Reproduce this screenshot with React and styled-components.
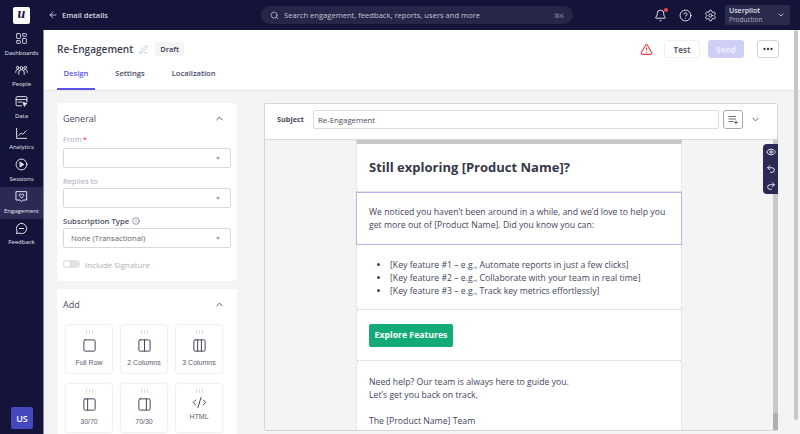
import React from 'react';
import styled, { createGlobalStyle } from 'styled-components';
import {
  ArrowLeft, Search, Bell, CircleHelp, Settings, ChevronDown, ChevronUp, PenLine, TriangleAlert,
  Ellipsis, LayoutDashboard, Info, Square, Columns2, Columns3, PanelLeft, PanelRight, CodeXml,
  Eye, Undo2, Redo2,
} from 'lucide-react';

const GlobalStyle = createGlobalStyle`
  html, body { margin: 0; padding: 0; height: 100%; overflow: hidden; }
  body { font-family: "Open Sans", "Liberation Sans", sans-serif; background: #f4f4f4; color: #3c3e52; }
  * { box-sizing: border-box; }
`;

const NavSvg = ({ children }) => (
  <svg width="13" height="13" viewBox="0 0 24 24" fill="none" stroke="currentColor" strokeWidth="1.8" strokeLinecap="round" strokeLinejoin="round">
    {children}
  </svg>
);

const PeopleIcon = () => (
  <NavSvg>
    <circle cx="12" cy="7.5" r="2.6" />
    <circle cx="4.8" cy="6.5" r="2.2" />
    <circle cx="19.2" cy="6.5" r="2.2" />
    <path d="M7 19v-3.5a5 5 0 0 1 10 0V19" />
    <path d="M1.5 15.5v-2a3.5 3.5 0 0 1 5-3" />
    <path d="M22.5 15.5v-2a3.5 3.5 0 0 0-5-3" />
  </NavSvg>
);

const DataIcon = () => (
  <NavSvg>
    <path d="M12 20H4a2 2 0 0 1-2-2V5a2 2 0 0 1 2-2h16a2 2 0 0 1 2 2v8" />
    <path d="M2 8.5h20" />
    <path d="M6 13h6" />
    <path d="M15 13.5l7 2.6-3 1.2-1.2 3z" fill="currentColor" />
  </NavSvg>
);

const AnalyticsIcon = () => (
  <NavSvg>
    <path d="M3 2.5V21h18.5" />
    <path d="M7 15.5l4.5-4.5 3 2.5 6-6.5" />
  </NavSvg>
);

const SessionsIcon = () => (
  <NavSvg>
    <circle cx="12" cy="12" r="10" />
    <path d="M9.8 7.8l6.2 4.2-6.2 4.2z" fill="currentColor" />
  </NavSvg>
);

const EngagementIcon = () => (
  <NavSvg>
    <path d="M2.5 3h19v15.5h-6.5L12 21.5l-3-3H2.5z" />
    <path d="M12 14.5l-3.6-3.4a2.1 2.1 0 0 1 3-3l.6.6.6-.6a2.1 2.1 0 0 1 3 3z" />
  </NavSvg>
);

const FeedbackIcon = () => (
  <NavSvg>
    <path d="M12 2.5a9.5 9.5 0 1 1-4.6 17.8L2.5 21.5l1.3-4.8A9.5 9.5 0 0 1 12 2.5z" />
    <path d="M8 12h8" />
  </NavSvg>
);

const AddVariableIcon = () => (
  <svg width="12" height="12" viewBox="0 0 24 24" fill="none" stroke="currentColor" strokeWidth="2">
    <path d="M3 5h15M3 10h15M3 15h10M18 13v8M14 17h8" />
  </svg>
);

const NAV = [
  { label: 'Dashboards', icon: <LayoutDashboard size={13} strokeWidth={1.6} /> },
  { label: 'People', icon: <PeopleIcon /> },
  { label: 'Data', icon: <DataIcon /> },
  { label: 'Analytics', icon: <AnalyticsIcon /> },
  { label: 'Sessions', icon: <SessionsIcon /> },
  { label: 'Engagement', icon: <EngagementIcon />, active: true },
  { label: 'Feedback', icon: <FeedbackIcon /> },
];

const TILES = [
  { label: 'Full Row', Icon: Square },
  { label: '2 Columns', Icon: Columns2 },
  { label: '3 Columns', Icon: Columns3 },
  { label: '30/70', Icon: PanelLeft },
  { label: '70/30', Icon: PanelRight },
  { label: 'HTML', Icon: CodeXml, compact: true },
];

const App = () => (
  <Shell>
    <GlobalStyle />
    <TopBar>
      <LogoBox><LogoMark>u</LogoMark></LogoBox>
      <BackLink><ArrowLeft size={10} strokeWidth={2} />Email details</BackLink>
      <SearchBar>
        <Search size={9} strokeWidth={2} />
        <SearchText>Search engagement, feedback, reports, users and more</SearchText>
        <Shortcut>⌘K</Shortcut>
      </SearchBar>
      <TopIcons>
        <BellWrap>
          <Bell size={13} strokeWidth={1.7} />
          <RedDot />
        </BellWrap>
        <CircleHelp size={13} strokeWidth={1.7} />
        <Settings size={13} strokeWidth={1.7} />
      </TopIcons>
      <Account>
        <AccountText>
          <AccountName>Userpilot</AccountName>
          <AccountEnv>Production</AccountEnv>
        </AccountText>
        <ChevronDown size={8} strokeWidth={2.4} />
      </Account>
    </TopBar>

    <Sidebar>
      <NavList>
        {NAV.map(({ label, icon, active }) => (
          <NavItem key={label} $active={active}>
            {icon}
            <span>{label}</span>
          </NavItem>
        ))}
      </NavList>
      <Avatar>US</Avatar>
    </Sidebar>

    <Main>
      <Header>
        <TitleRow>
          <Title>Re-Engagement</Title>
          <PenLine size={9} strokeWidth={1.5} color="#a5a6b2" />
          <Badge>Draft</Badge>
          <Actions>
            <TriangleAlert size={13} strokeWidth={2} color="#ee3b45" />
            <TestButton>Test</TestButton>
            <SendButton>Send</SendButton>
            <MoreButton><Ellipsis size={12} strokeWidth={2.6} /></MoreButton>
          </Actions>
        </TitleRow>
        <Tabs>
          <Tab $active>Design</Tab>
          <Tab>Settings</Tab>
          <Tab>Localization</Tab>
        </Tabs>
      </Header>

      <Body>
        <LeftColumn>
          <Card>
            <CardHead>General<ChevronUp size={11} strokeWidth={2} /></CardHead>
            <FieldLabel $muted>From<Req>*</Req></FieldLabel>
            <SelectBox><Caret /></SelectBox>
            <FieldLabel $muted>Replies to</FieldLabel>
            <SelectBox><Caret /></SelectBox>
            <FieldLabel>Subscription Type <Info size={8} strokeWidth={1.6} /></FieldLabel>
            <SelectBox>None (Transactional)<Caret /></SelectBox>
            <ToggleRow><Toggle />Include Signature</ToggleRow>
          </Card>
          <AddCard>
            <CardHead>Add<ChevronUp size={11} strokeWidth={2} /></CardHead>
            <TileGrid>
              {TILES.map(({ label, Icon, compact }) => (
                <Tile key={label} $compact={compact}>
                  <Grip />
                  <Icon size={15} strokeWidth={1.6} />
                  <span>{label}</span>
                </Tile>
              ))}
            </TileGrid>
          </AddCard>
        </LeftColumn>

        <Editor>
          <SubjectRow>
            <SubjectLabel>Subject</SubjectLabel>
            <SubjectInput>Re-Engagement</SubjectInput>
            <SquareButton><AddVariableIcon /></SquareButton>
            <SubjectToggle><ChevronDown size={11} strokeWidth={1.8} /></SubjectToggle>
          </SubjectRow>
          <Canvas>
            <EmailColumn>
              <HeadingBlock>Still exploring [Product Name]?</HeadingBlock>
              <TextBlock>
                We noticed you haven’t been around in a while, and we’d love to help you
                get more out of [Product Name]. Did you know you can:
              </TextBlock>
              <ListBlock>
                <ul>
                  <li>[Key feature #1 – e.g., Automate reports in just a few clicks]</li>
                  <li>[Key feature #2 – e.g., Collaborate with your team in real time]</li>
                  <li>[Key feature #3 – e.g., Track key metrics effortlessly]</li>
                </ul>
              </ListBlock>
              <ButtonBlock><CtaButton>Explore Features</CtaButton></ButtonBlock>
              <FooterBlock>
                Need help? Our team is always here to guide you.<br />
                Let’s get you back on track,<br /><br />
                The [Product Name] Team
              </FooterBlock>
            </EmailColumn>
            <FloatTools>
              <Eye size={10} strokeWidth={2.2} />
              <Undo2 size={10} strokeWidth={2.2} />
              <Redo2 size={10} strokeWidth={2.2} />
            </FloatTools>
            <CanvasScroll />
          </Canvas>
        </Editor>
      </Body>
      <PageScroll />
    </Main>
  </Shell>
);

const Shell = styled.div`
  width: 800px;
  height: 434px;
  display: grid;
  grid-template-columns: 44px 1fr;
  grid-template-rows: 30px 1fr;
  overflow: hidden;
`;

const TopBar = styled.header`
  grid-column: 1 / 3;
  background: #14143a;
  color: #e4e4ec;
  display: flex;
  align-items: center;
  padding: 0 9px 0 13px;
`;

const LogoBox = styled.div`
  width: 17px;
  height: 17px;
  background: #fff;
  border-radius: 2px;
  display: flex;
  align-items: center;
  justify-content: center;
`;

const LogoMark = styled.span`
  font-family: "Liberation Serif", serif;
  font-style: italic;
  font-weight: 700;
  font-size: 14px;
  line-height: 1;
  color: #14143a;
  margin-top: -3px;
`;

const BackLink = styled.div`
  display: flex;
  align-items: center;
  gap: 4px;
  margin-left: 18px;
  width: 213px;
  font-size: 7.5px;
  font-weight: 600;
  color: #d5d5e0;
`;

const SearchBar = styled.div`
  width: 312px;
  height: 18px;
  border-radius: 9px;
  background: #26264a;
  display: flex;
  align-items: center;
  padding: 0 9px;
  color: #c4c4d2;
`;

const SearchText = styled.span`
  margin-left: 5px;
  flex: 1;
  font-size: 7.6px;
`;

const Shortcut = styled.span`
  font-size: 6px;
  color: #8c8ca4;
  font-family: "DejaVu Sans", sans-serif;
`;

const TopIcons = styled.div`
  display: flex;
  align-items: center;
  gap: 12px;
  margin-left: 81px;
  color: #f0f0f4;
`;

const BellWrap = styled.div`
  position: relative;
  display: flex;
`;

const RedDot = styled.i`
  position: absolute;
  top: -1px;
  right: -1px;
  width: 4px;
  height: 4px;
  border-radius: 50%;
  background: #f04a4a;
`;

const Account = styled.div`
  margin-left: 8px;
  width: 65px;
  height: 20px;
  border-radius: 2px;
  background: #2a2a4c;
  display: flex;
  align-items: center;
  justify-content: space-between;
  padding: 0 5px 0 4px;
`;

const AccountText = styled.div`
  display: flex;
  flex-direction: column;
`;

const AccountName = styled.span`
  font-size: 7px;
  line-height: 9px;
  font-weight: 600;
`;

const AccountEnv = styled.span`
  font-size: 6.5px;
  line-height: 9px;
  color: #b4b4c4;
`;

const Sidebar = styled.nav`
  background: #14143a;
  border-right: 1px solid #8a8a9c;
  display: flex;
  flex-direction: column;
  justify-content: space-between;
  padding-bottom: 5px;
  overflow: hidden;
`;

const NavList = styled.div`
  display: flex;
  flex-direction: column;
  margin-top: -1px;
`;

const NavItem = styled.div`
  height: 31.6px;
  display: flex;
  flex-direction: column;
  align-items: center;
  justify-content: center;
  gap: 3.5px;
  color: #e6e6ee;
  background: ${({ $active }) => ($active ? '#2a2a55' : 'transparent')};
  span {
    font-size: 6px;
    line-height: 9px;
    font-weight: 500;
    white-space: nowrap;
  }
`;

const Avatar = styled.div`
  width: 22px;
  height: 22px;
  margin-left: 11px;
  border-radius: 2px;
  background: #4447bd;
  color: #fff;
  font-size: 9px;
  font-weight: 600;
  display: flex;
  align-items: center;
  justify-content: center;
`;

const Main = styled.main`
  position: relative;
  display: flex;
  flex-direction: column;
  min-width: 0;
  min-height: 0;
`;

const Header = styled.div`
  height: 61px;
  flex: none;
  background: #fff;
  border-bottom: 1px solid #e6e6e8;
  padding: 10px 21px 0 13px;
  display: flex;
  flex-direction: column;
  justify-content: space-between;
`;

const TitleRow = styled.div`
  display: flex;
  align-items: center;
  gap: 6px;
  height: 18px;
`;

const Title = styled.div`
  font-size: 10.1px;
  font-weight: 600;
  color: #3c3e52;
`;

const Badge = styled.div`
  margin-left: 1px;
  height: 14px;
  padding: 0 5px;
  display: flex;
  align-items: center;
  border-radius: 2px;
  background: #f4f4f5;
  font-size: 7.5px;
  font-weight: 600;
`;

const Actions = styled.div`
  margin-left: auto;
  display: flex;
  align-items: center;
`;

const ActionButton = styled.div`
  width: 36px;
  height: 18px;
  border-radius: 3px;
  display: flex;
  align-items: center;
  justify-content: center;
  font-size: 8px;
  font-weight: 700;
`;

const TestButton = styled(ActionButton)`
  margin-left: 11px;
  border: 1px solid #f0f0f2;
  color: #60626f;
`;

const SendButton = styled(ActionButton)`
  margin-left: 8px;
  background: #cfcff6;
  color: #eeeeff;
`;

const MoreButton = styled(ActionButton)`
  margin-left: 13px;
  width: 22px;
  border: 1px solid #d4d4d8;
  color: #2c2c44;
`;

const Tabs = styled.div`
  display: flex;
  gap: 14px;
`;

const Tab = styled.div`
  height: 24px;
  padding: 0 6.5px 8px;
  display: flex;
  align-items: center;
  font-size: 7.6px;
  font-weight: 600;
  color: ${({ $active }) => ($active ? '#5a55e6' : '#4a4c66')};
  border-bottom: 2px solid ${({ $active }) => ($active ? '#5a55e6' : 'transparent')};
`;

const Body = styled.div`
  flex: 1;
  min-height: 0;
  display: flex;
  gap: 27px;
  padding: 12px 22px 0 13px;
  overflow: hidden;
`;

const LeftColumn = styled.div`
  width: 180px;
  flex: none;
  display: flex;
  flex-direction: column;
  gap: 8px;
`;

const Card = styled.section`
  background: #fff;
  border-radius: 2px;
  padding: 0 6px;
  height: 178px;
  flex: none;
  box-shadow: 0 0 1px rgba(0, 0, 0, 0.08);
`;

const AddCard = styled(Card)`
  height: 160px;
`;

const CardHead = styled.div`
  height: 30px;
  margin-bottom: -3px;
  display: flex;
  align-items: center;
  justify-content: space-between;
  padding-right: 6px;
  font-size: 9px;
  font-weight: 500;
  color: #4a4c5c;
`;

const SelectBox = styled.div`
  position: relative;
  height: 20px;
  margin-bottom: 2px;
  border: 1px solid #d8d8dc;
  border-radius: 2px;
  padding-left: 7px;
  display: flex;
  align-items: center;
  font-size: 7.7px;
  color: #60626f;
`;

const FieldLabel = styled.div`
  height: 18px;
  display: flex;
  align-items: center;
  gap: 3px;
  font-size: 7.7px;
  font-weight: ${({ $muted }) => ($muted ? 400 : 600)};
  color: ${({ $muted }) => ($muted ? '#a8a9b4' : '#4a4c5c')};
  ${SelectBox} + & { padding-top: 3px; }
`;

const Req = styled.span`
  color: #e33;
  margin-left: -2px;
`;

const Caret = styled.i`
  position: absolute;
  right: 10px;
  top: 8px;
  border: 2.5px solid transparent;
  border-top: 3px solid #a4a5b0;
`;

const ToggleRow = styled.div`
  margin-top: 12px;
  height: 8px;
  display: flex;
  align-items: center;
  gap: 5px;
  font-size: 8px;
  color: #adaeb8;
`;

const Toggle = styled.i`
  position: relative;
  width: 17px;
  height: 8px;
  border-radius: 4px;
  background: #e2e2e6;
  &::before {
    content: '';
    position: absolute;
    left: 1px;
    top: 1px;
    width: 6px;
    height: 6px;
    border-radius: 50%;
    background: #fff;
  }
`;

const TileGrid = styled.div`
  display: grid;
  grid-template-columns: repeat(3, 46px);
  grid-auto-rows: 48px;
  column-gap: 9px;
  row-gap: 11px;
  padding: 9px 0 0 3px;
`;

const Tile = styled.div`
  border-radius: 2px;
  box-shadow: 0 0 2px rgba(0, 0, 0, 0.22);
  display: flex;
  flex-direction: column;
  align-items: center;
  padding-top: 5px;
  font-family: "Liberation Sans", sans-serif;
  font-size: 7px;
  color: #5a5c6c;
  svg {
    color: #44465a;
    margin-top: ${({ $compact }) => ($compact ? '2px' : '4px')};
  }
  span {
    line-height: 9px;
    margin-top: ${({ $compact }) => ($compact ? '2px' : '5px')};
  }
`;

const Grip = styled.i`
  width: 9px;
  height: 4px;
  flex: none;
  background-image: radial-gradient(#b8b8c0 0.7px, transparent 0.8px);
  background-size: 3px 2px;
`;

const Editor = styled.section`
  flex: 1;
  min-width: 0;
  height: 328px;
  display: flex;
  flex-direction: column;
  background: #fff;
  border: 1px solid #d6d6d8;
  border-radius: 2px;
`;

const SubjectRow = styled.div`
  height: 36px;
  flex: none;
  display: flex;
  align-items: flex-start;
  padding: 6px 0 0 12px;
  border-bottom: 1px solid #d8d8da;
`;

const SubjectLabel = styled.div`
  width: 36px;
  height: 18px;
  display: flex;
  align-items: center;
  font-size: 7.3px;
  font-weight: 700;
  color: #4a4c5c;
`;

const SubjectInput = styled.div`
  width: 406px;
  height: 19px;
  border: 1px solid #dcdcde;
  border-radius: 2px;
  padding-left: 4px;
  display: flex;
  align-items: center;
  font-size: 7.8px;
  color: #4a4c5c;
`;

const SquareButton = styled.div`
  margin-left: 4px;
  width: 20px;
  height: 19px;
  border: 1px solid #a8a8ae;
  border-radius: 3px;
  display: flex;
  align-items: center;
  justify-content: center;
  color: #6a6c78;
`;

const SubjectToggle = styled.div`
  margin-left: 7px;
  height: 19px;
  display: flex;
  align-items: center;
  color: #4a4c5c;
`;

const Canvas = styled.div`
  position: relative;
  flex: 1;
  min-height: 0;
  margin-right: -1px;
  overflow: hidden;
  background: #f4f4f4;
  display: flex;
  justify-content: flex-start;
  padding-left: 91px;
`;

const EmailColumn = styled.div`
  width: 326px;
  flex: none;
  background: #fff;
  border-top: 4px solid #c8c8ca;
  border-left: 1px dotted #d4d4d6;
  border-right: 1px dotted #d4d4d6;
  font-size: 8.7px;
  line-height: 13px;
  color: #44465a;
`;

const Block = styled.div`
  padding: 0 12px;
  border-bottom: 1px dotted #cfcfd2;
`;

const HeadingBlock = styled(Block)`
  height: 48px;
  display: flex;
  align-items: center;
  font-size: 13px;
  font-weight: 700;
  color: #363848;
`;

const TextBlock = styled(Block)`
  height: 53px;
  margin: 0 -1px;
  padding: 13px 12px 0;
  border: 1px solid #b8b4f0;
`;

const ListBlock = styled(Block)`
  height: 65px;
  padding-top: 14px;
  ul { margin: 0; padding-left: 21px; }
`;

const ButtonBlock = styled(Block)`
  height: 51px;
  padding-top: 14px;
`;

const CtaButton = styled.div`
  width: 84px;
  height: 23px;
  border-radius: 2px;
  background: #12ab78;
  color: #fff;
  font-weight: 700;
  display: flex;
  align-items: center;
  justify-content: center;
`;

const FooterBlock = styled.div`
  padding: 15px 12px 0;
`;

const FloatTools = styled.div`
  position: absolute;
  top: 4px;
  right: 0;
  width: 15px;
  height: 50px;
  z-index: 1;
  border-radius: 4px 0 0 4px;
  background: #2a2a55;
  color: #f0f0f6;
  display: flex;
  flex-direction: column;
  align-items: center;
  justify-content: space-around;
`;

const CanvasScroll = styled.div`
  position: absolute;
  top: 0;
  right: 0;
  bottom: 0;
  width: 5px;
  background: linear-gradient(#c8c8ca 94%, #b0b0b4 94%);
`;

const PageScroll = styled.div`
  position: absolute;
  top: 0;
  right: 2px;
  width: 4px;
  height: 390px;
  background: #c4c8cc;
  border-radius: 2px;
`;

export default App;
